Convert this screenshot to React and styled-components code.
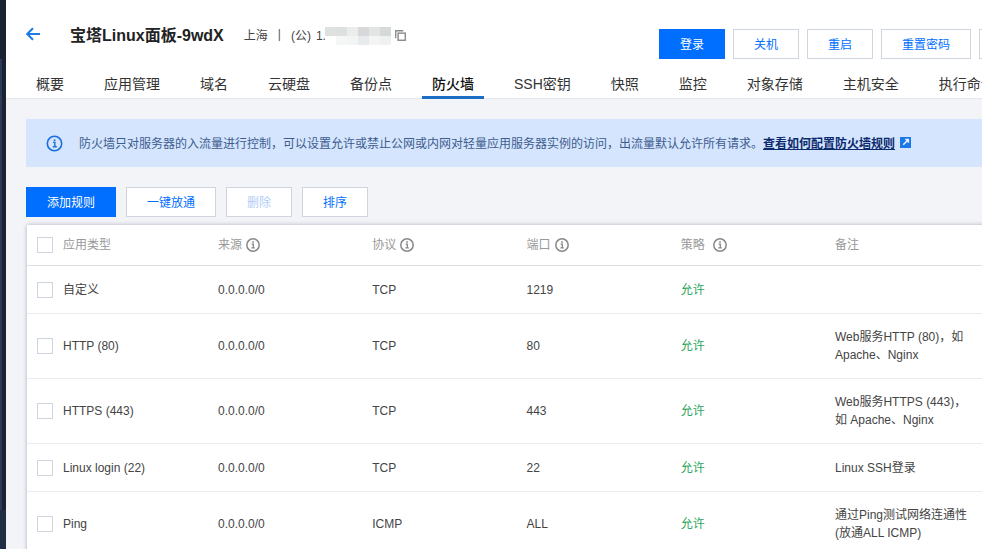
import React from "react";
import styled, { createGlobalStyle } from "styled-components";

const GlobalStyle = createGlobalStyle`
  html, body, #root {
    height: 100%;
    margin: 0;
    overflow: hidden;
  }

  body {
    font-family: "Liberation Sans", "Noto Sans CJK SC", sans-serif;
    font-size: 12px;
    color: #333;
    background: #f2f4f8;
  }
`;

const Page = styled.div`
  display: flex;
  width: 982px;
  height: 549px;
  overflow: hidden;
`;

const SideEdge = styled.div`
  display: flex;
  flex-direction: column;
  flex: 0 0 6px;
  background: #1b2230;
`;

const EdgeMiddle = styled.div`
  margin-top: 59px;
  height: 451px;
  background: linear-gradient(to right, #2b3a58 0, #2b3a58 2px, #1b2230 2px);
`;

const EdgeBottom = styled.div`
  flex: 1;
  background: #1f2e42;
`;

const Main = styled.div`
  flex: 1;
  min-width: 0;
  overflow: hidden;
`;

const Header = styled.header`
  height: 98px;
  background: #fff;
  border-bottom: 1px solid #e4e7ee;
  box-sizing: content-box;
`;

const TopRow = styled.div`
  display: flex;
  justify-content: space-between;
  height: 71px;
  padding-left: 20px;
`;

const TitleGroup = styled.div`
  display: flex;
  align-items: center;
  flex-shrink: 0;
  height: 24px;
  margin-top: 22px;
`;

const BackLink = styled.a`
  display: flex;
  margin-right: 30px;
`;

const Title = styled.h1`
  margin: 0 20px 0 0;
  font-size: 16px;
  font-weight: 700;
  color: #222;
  white-space: nowrap;
`;

const Meta = styled.span`
  color: #444;
  white-space: nowrap;
`;

const MetaDivider = styled.span`
  margin: 0 10px;
  color: #555;
`;

const PublicTag = styled.span`
  margin-right: 5px;
`;

const Mosaic = styled.div`
  display: grid;
  grid-template-columns: repeat(6, 11px);
  grid-auto-rows: 9px;
  margin: 3px 4px 0 -1px;
  filter: blur(0.7px);
`;

const Tile = styled.i`
  background: ${(p) => p.$color};
`;

const CopyIcon = styled.svg`
  width: 11px;
  height: 11px;
  margin-top: 2px;
`;

const ButtonGroup = styled.div`
  display: flex;
  gap: 8px;
  margin-top: 29px;
  flex-shrink: 0;
  margin-right: -87px;
`;

const Button = styled.button`
  flex-shrink: 0;
  width: ${(p) => p.$width || 66}px;
  height: 30px;
  padding: 0 0 2px;
  font: inherit;
  color: ${(p) => (p.$primary ? "#fff" : p.disabled ? "#b2cdf7" : "#006eff")};
  background: ${(p) => (p.$primary ? "#006eff" : "#fff")};
  border: 1px solid ${(p) => (p.$primary ? "#006eff" : "#cfd5de")};
  cursor: pointer;
`;

const Tabs = styled.nav`
  display: flex;
  height: 27px;
  padding-left: 20px;
`;

const Tab = styled.a`
  flex-shrink: 0;
  padding: 0 10px;
  margin-right: 20px;
  line-height: 26px;
  font-size: 14px;
  white-space: nowrap;
  color: ${(p) => (p.$active ? "#111" : "#333")};
  font-weight: ${(p) => (p.$active ? 500 : 400)};
  border-bottom: ${(p) => (p.$active ? "3px solid #1b6ec4" : "none")};
  box-sizing: content-box;
  height: ${(p) => (p.$active ? 25 : 27)}px;
`;

const Content = styled.div`
  padding: 20px 0 0 20px;
`;

const Notice = styled.div`
  display: flex;
  align-items: center;
  height: 48px;
  padding: 0 0 2px 20px;
  box-sizing: border-box;
  background: #d4e5fd;
  color: #3d5c8f;
  white-space: nowrap;
`;

const NoticeIcon = styled.svg`
  width: 17px;
  height: 17px;
  margin: 2px 16px 0 0;
  flex-shrink: 0;
`;

const NoticeLink = styled.a`
  font-weight: 700;
  color: #0b2a6e;
  text-decoration: underline;
`;

const LinkIcon = styled.svg`
  width: 11px;
  height: 11px;
  margin-left: 5px;
`;

const Toolbar = styled.div`
  display: flex;
  gap: 10px;
  margin-top: 20px;
`;

const Table = styled.div`
  margin: 8px 0 0 1px;
  width: 1000px;
  background: #fff;
  box-shadow: 0 0 4px rgba(40, 50, 70, 0.35);
`;

const Row = styled.div`
  display: grid;
  grid-template-columns: 171px repeat(5, 154.25px) 1fr;
  align-items: center;
  height: ${(p) => p.$height}px;
  box-sizing: border-box;
  border-bottom: 1px solid ${(p) => (p.$head ? "#dcdfe4" : "#e8ebf0")};
  color: ${(p) => (p.$head ? "#999" : "#444")};
`;

const FirstCell = styled.div`
  display: flex;
  align-items: center;
  gap: 10px;
  padding-left: 10px;
  line-height: 18px;
`;

const Cell = styled.div`
  display: flex;
  align-items: center;
  gap: ${(p) => p.$gap || 4}px;
  padding-left: 20px;
  line-height: 18px;
  color: ${(p) => p.$color || "inherit"};
`;

const NoteText = styled.div`
  width: 134px;
`;

const Checkbox = styled.span`
  flex-shrink: 0;
  width: 14px;
  height: 14px;
  border: 1px solid #cfd5de;
  background: #fff;
`;

const HelpIcon = ({ color = "#888" }) => (
  <svg width="14" height="14" viewBox="0 0 14 14" fill="none">
    <circle cx="7" cy="7" r="6.2" stroke={color} strokeWidth="1.5" />
    <path d="M5.6 6.2h1.7v3.4M5.4 9.9h3.4" stroke={color} strokeWidth="1.3" />
    <rect x="6.2" y="3.2" width="1.6" height="1.6" fill={color} />
  </svg>
);

const mosaic = [
  "#dfe1e1", "#dde0e0", "#ececec", "#d6d8da", "#e3e4e4", "#d6d9d9",
  "#ffffff", "#f5f6f6", "#f3f4f4", "#e8ebee", "#f4f4f4", "#eff0f0",
];

const tabs = [
  "概要", "应用管理", "域名", "云硬盘", "备份点", "防火墙",
  "SSH密钥", "快照", "监控", "对象存储", "主机安全", "执行命令",
];

const heads = [
  { label: "来源", help: true },
  { label: "协议", help: true },
  { label: "端口", help: true },
  { label: "策略", help: true, gap: 8 },
  { label: "备注" },
];

const rules = [
  { type: "自定义", protocol: "TCP", port: "1219", height: 48 },
  { type: "HTTP (80)", protocol: "TCP", port: "80", note: "Web服务HTTP (80)，如 Apache、Nginx", height: 65 },
  { type: "HTTPS (443)", protocol: "TCP", port: "443", note: "Web服务HTTPS (443)，如 Apache、Nginx", height: 65 },
  { type: "Linux login (22)", protocol: "TCP", port: "22", note: "Linux SSH登录", height: 48 },
  { type: "Ping", protocol: "ICMP", port: "ALL", note: "通过Ping测试网络连通性 (放通ALL ICMP)", height: 65 },
];

export default function App() {
  return (
    <Page>
      <GlobalStyle />
      <SideEdge>
        <EdgeMiddle />
        <EdgeBottom />
      </SideEdge>
      <Main>
        <Header>
          <TopRow>
            <TitleGroup>
              <BackLink>
                <svg width="14" height="14" viewBox="0 0 14 14" fill="none">
                  <path d="M14 7H1.5M7 1.2 1.2 7 7 12.8" stroke="#1b7be8" strokeWidth="2" />
                </svg>
              </BackLink>
              <Title>宝塔Linux面板-9wdX</Title>
              <Meta>上海</Meta>
              <MetaDivider>|</MetaDivider>
              <Meta>
                <PublicTag>(公)</PublicTag>1.
              </Meta>
              <Mosaic>
                {mosaic.map((color, i) => (
                  <Tile key={i} $color={color} />
                ))}
              </Mosaic>
              <CopyIcon viewBox="0 0 12 12" fill="none">
                <path d="M.8 9V.8H9" stroke="#888" strokeWidth="1.4" />
                <rect x="3.4" y="3.4" width="7.8" height="7.8" stroke="#888" strokeWidth="1.5" />
              </CopyIcon>
            </TitleGroup>
            <ButtonGroup>
              <Button $primary>登录</Button>
              <Button>关机</Button>
              <Button>重启</Button>
              <Button $width={90}>重置密码</Button>
              <Button $width={90} />
            </ButtonGroup>
          </TopRow>
          <Tabs>
            {tabs.map((tab) => (
              <Tab key={tab} $active={tab === "防火墙"}>
                {tab}
              </Tab>
            ))}
          </Tabs>
        </Header>
        <Content>
          <Notice>
            <NoticeIcon viewBox="0 0 17 17" fill="none">
              <circle cx="8.5" cy="8.5" r="7.2" stroke="#1b6fdc" strokeWidth="1.6" />
              <path d="M7 7.4h1.9v4.2M6.8 11.8h4" stroke="#1b6fdc" strokeWidth="1.4" />
              <rect x="7.7" y="4.4" width="1.7" height="1.7" fill="#1b6fdc" />
            </NoticeIcon>
            防火墙只对服务器的入流量进行控制，可以设置允许或禁止公网或内网对轻量应用服务器实例的访问，出流量默认允许所有请求。
            <NoticeLink>查看如何配置防火墙规则</NoticeLink>
            <LinkIcon viewBox="0 0 11 11">
              <path d="M0 0H11V11H0Z" fill="#1b78e8" />
              <path d="M3.2 7.8 7.6 3.4M5.2 2.6H8.4V5.8" fill="none" stroke="#e6f0fe" strokeWidth="1.5" />
            </LinkIcon>
          </Notice>
          <Toolbar>
            <Button $primary $width={90}>添加规则</Button>
            <Button $width={90}>一键放通</Button>
            <Button disabled>删除</Button>
            <Button>排序</Button>
          </Toolbar>
          <Table>
            <Row $head $height={41}>
              <FirstCell>
                <Checkbox />
                应用类型
              </FirstCell>
              {heads.map((head) => (
                <Cell key={head.label} $gap={head.gap}>
                  {head.label}
                  {head.help && <HelpIcon />}
                </Cell>
              ))}
            </Row>
            {rules.map((rule) => (
              <Row key={rule.type} $height={rule.height}>
                <FirstCell>
                  <Checkbox />
                  {rule.type}
                </FirstCell>
                <Cell>0.0.0.0/0</Cell>
                <Cell>{rule.protocol}</Cell>
                <Cell>{rule.port}</Cell>
                <Cell $color="#2ba45c">允许</Cell>
                <Cell>
                  <NoteText>{rule.note}</NoteText>
                </Cell>
              </Row>
            ))}
          </Table>
        </Content>
      </Main>
    </Page>
  );
}
